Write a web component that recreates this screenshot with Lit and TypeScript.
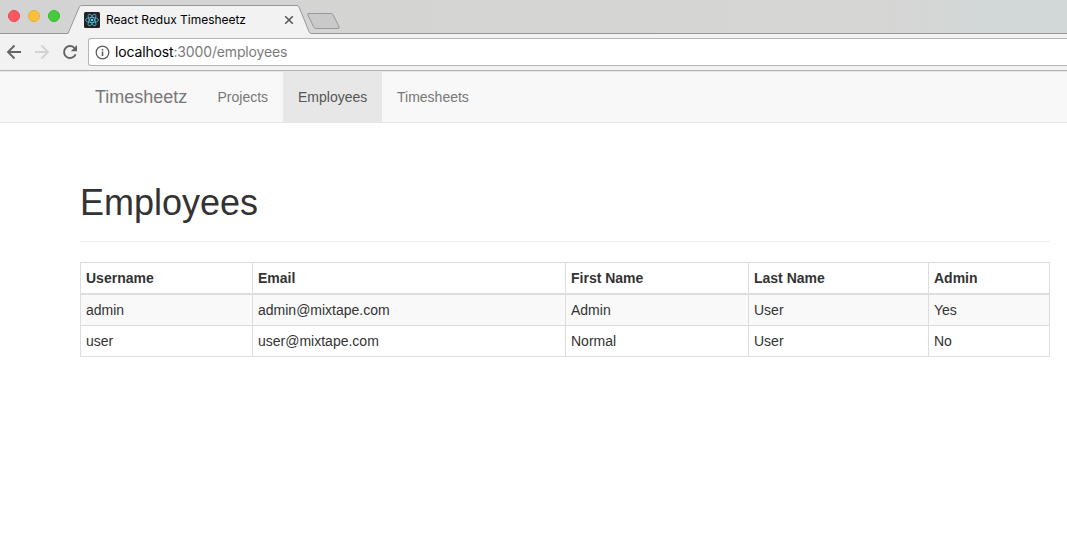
import { LitElement, html, css, svg } from "lit";
import { customElement } from "lit/decorators.js";

const columns = ["Username", "Email", "First Name", "Last Name", "Admin"];
const rows = [
  ["admin", "admin@mixtape.com", "Admin", "User", "Yes"],
  ["user", "user@mixtape.com", "Normal", "User", "No"],
];

@customElement("browser-chrome")
class BrowserChrome extends LitElement {
  static styles = css`
    :host { display: block; font-family: Inter, Roboto, sans-serif; color: #000; }
    .strip { display: flex; height: 34px; box-sizing: border-box; border-bottom: 1px solid #979797;
      background: linear-gradient(90deg, #d3d3d3, #d6d6d4 82%, #d2d7d7 92%); }
    .lights { display: flex; gap: 8px; box-sizing: border-box; padding: 10px 0 0 8px; width: 67px; flex: none; }
    .light { width: 12px; height: 12px; border-radius: 50%; box-sizing: border-box; }
    .red { background: #f95860; border: 1px solid #e8474e; }
    .amber { background: #fbbf39; border: 1px solid #e8ac2c; }
    .green { background: #43cd3c; border: 1px solid #37b931; }
    .tab { position: relative; width: 275px; height: 34px; flex: none; }
    .shape { position: absolute; left: 0; top: 0; display: block; }
    .label { position: relative; display: flex; align-items: center; height: 14px; padding: 13px 0 0 17px; }
    .favicon { display: block; flex: none; }
    .title { font-size: 12px; line-height: 14px; letter-spacing: -0.03px; width: 178px; margin-left: 6px; white-space: nowrap; }
    .toolbar { display: flex; align-items: center; height: 37px; box-sizing: border-box; background: #f2f2f2;
      border-bottom: 1px solid #b4b4b4; }
    .nav { display: block; flex: none; width: 88px; height: 36px; }
    .omnibox { display: flex; align-items: center; flex: 1; height: 28px; box-sizing: border-box; background: #fff;
      border: 1px solid #b5b5b5; border-right: 0; border-radius: 3px 0 0 3px; padding-left: 6px; }
    .url { margin-left: 5px; font-size: 14px; line-height: 18px; letter-spacing: -0.15px; white-space: nowrap; }
    .path { color: #7b7b7b; }
  `;

  render() {
    return html`
      <div class="strip">
        <div class="lights">
          <span class="light red"></span><span class="light amber"></span><span class="light green"></span>
        </div>
        <div class="tab">
          <svg class="shape" width="275" height="34" viewBox="0 0 275 34">
            <path d="M0 34V33.500H1L12.300 7Q13 5.500 14.500 5.500H230Q231.300 5.500 232 7L242 31.500Q243 33.500 244.500 33.500V34Z" fill="#f2f2f2" />
            <path d="M0 33.500H1L12.300 7Q13 5.500 14.500 5.500H230Q231.300 5.500 232 7L242 31.500Q243 33.500 244.500 33.500" fill="none" stroke="#989898" />
            <path d="M242 13.500H264Q265.500 13.500 266.200 15L272 26.500Q273 28.500 271 28.500H249Q247.500 28.500 246.800 27L240.800 15Q240 13.500 242 13.500Z" fill="#c9c9c9" stroke="#999" />
          </svg>
          <div class="label">
            <svg class="favicon" width="16" height="16" viewBox="0 0 16 16">
              <rect width="16" height="16" rx="1.500" fill="#222327" />
              <g fill="none" stroke="#58b9d3" stroke-width=".8">
                ${[0, 60, 120].map((a) => svg`<ellipse cx="8" cy="8" rx="6.500" ry="2.500" transform="rotate(${a} 8 8)" />`)}
              </g>
              <circle cx="8" cy="8" r="1.300" fill="#61d0ec" />
            </svg>
            <span class="title">React Redux Timesheetz</span>
            <svg width="10" height="10" viewBox="0 0 10 10"><path d="M1.200 1.200L8.800 8.800M8.800 1.200L1.200 8.800" stroke="#5a5a5a" stroke-width="1.600" /></svg>
          </div>
        </div>
      </div>
      <div class="toolbar">
        <svg class="nav" viewBox="0 0 88 36" fill="none" stroke-width="1.900">
          <path d="M21 18H8.500M14.500 11.500L8 18L14.500 24.500" stroke="#636363" />
          <path d="M35 18H47.500M41.500 11.500L48 18L41.500 24.500" stroke="#d2d2d2" />
          <path d="M75.600 20.300A6 6 0 1 1 74.300 13.800" stroke="#636363" />
          <path d="M77 11V17.200H70.800Z" fill="#636363" />
        </svg>
        <div class="omnibox">
          <svg width="15" height="15" viewBox="0 0 15 15">
            <circle cx="7.500" cy="7.500" r="6.300" fill="none" stroke="#5c5c5c" stroke-width="1.300" />
            <path d="M7.500 6.500V11M7.500 3.900V5.500" stroke="#5c5c5c" stroke-width="1.600" />
          </svg>
          <span class="url">localhost<span class="path">:3000/employees</span></span>
        </div>
      </div>
    `;
  }
}

@customElement("app-root")
class AppRoot extends LitElement {
  static styles = css`
    :host { display: block; min-height: 541px; background: #fff; overflow: hidden; color: #333;
      font: 14px/20px "Liberation Sans", Arial, sans-serif; }
    .navbar { display: flex; height: 52px; box-sizing: border-box; padding-left: 80px; background: #f8f8f8;
      border-top: 1px solid #e7e7e7; border-bottom: 1px solid #e7e7e7; color: #777; }
    .brand { box-sizing: border-box; width: 122.500px; padding: 15px 0 0 15px; font-size: 18px; }
    .item { box-sizing: border-box; padding: 15px; white-space: nowrap; }
    .projects { width: 80.500px; }
    .active { width: 99px; background: #e7e7e7; color: #555; }
    .page { width: 970px; margin-left: 80px; }
    h1 { margin: 0; padding-top: 60px; height: 119px; box-sizing: border-box; border-bottom: 1px solid #eee;
      font-size: 36px; line-height: 40px; font-weight: 400; }
    table { width: 970px; margin-top: 20px; table-layout: fixed; border-spacing: 0; border-right: 1px solid #ddd; }
    th, td { box-sizing: border-box; height: 31px; padding: 0 5px; text-align: left; border-left: 1px solid #ddd;
      border-bottom: 1px solid #ddd; white-space: nowrap; }
    th { height: 33px; border-top: 1px solid #ddd; border-bottom-width: 2px; }
    .striped td { background: #f9f9f9; }
    .c0 { width: 172px; } .c1 { width: 313px; } .c2 { width: 183px; } .c3 { width: 180px; }
  `;

  render() {
    return html`
      <browser-chrome></browser-chrome>
      <nav class="navbar">
        <div class="brand">Timesheetz</div>
        <div class="item projects">Projects</div>
        <div class="item active">Employees</div>
        <div class="item">Timesheets</div>
      </nav>
      <main class="page">
        <h1>Employees</h1>
        <table>
          <thead><tr>${columns.map((c, i) => html`<th class="c${i}">${c}</th>`)}</tr></thead>
          <tbody>
            ${rows.map((r, i) => html`<tr class=${i === 0 ? "striped" : ""}>${r.map((v) => html`<td>${v}</td>`)}</tr>`)}
          </tbody>
        </table>
      </main>
    `;
  }
}
